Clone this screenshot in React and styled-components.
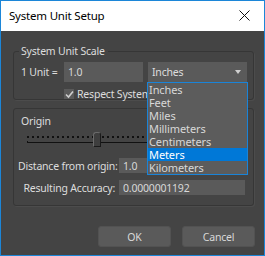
import React from "react";
import styled, { createGlobalStyle } from "styled-components";

const GlobalStyle = createGlobalStyle`
  html, body {
    margin: 0;
    padding: 0;
    background: #444444;
  }
  body {
    font-family: "Noto Sans", "Open Sans", sans-serif;
    font-size: 10.5px;
    letter-spacing: -0.2px;
  }
`;

const units = ["Inches", "Feet", "Miles", "Millimeters", "Centimeters", "Meters", "Kilometers"];

function App() {
    return (
        <Window>
            <GlobalStyle />
            <TitleBar>
                <Title>System Unit Setup</Title>
                <CloseIcon width="11" height="11" viewBox="0 0 11 11">
                    <path d="M0.5 0.5 L10.5 10.5 M10.5 0.5 L0.5 10.5" stroke="#111" strokeWidth="1" />
                </CloseIcon>
            </TitleBar>
            <Body>
                <ScaleGroup>
                    <Legend>System Unit Scale</Legend>
                    <UnitRow>
                        <Label>1 Unit =</Label>
                        <Field width={79} height={20}>1.0</Field>
                        <SelectWrap>
                            <Select>
                                Inches
                                <Arrow />
                            </Select>
                            <List>
                                {units.map((u) => (
                                    <Item key={u} selected={u === "Meters"}>{u}</Item>
                                ))}
                            </List>
                        </SelectWrap>
                    </UnitRow>
                    <CheckRow>
                        <CheckBox>
                            <svg width="9" height="9" viewBox="0 0 9 9">
                                <path d="M1 4.5 L3.5 7 L8 1.5" stroke="#cfcfcf" strokeWidth="1.6" fill="none" />
                            </svg>
                        </CheckBox>
                        <span>Respect System Units</span>
                    </CheckRow>
                </ScaleGroup>

                <OriginGroup>
                    <Heading>Origin</Heading>
                    <Slider>
                        <Dots />
                        <Track />
                        <Thumb />
                    </Slider>
                    <FieldGrid>
                        <RightLabel>Distance from origin:</RightLabel>
                        <Field height={15}>1.0</Field>
                        <RightLabel>Resulting Accuracy:</RightLabel>
                        <Field height={15}>0.0000001192</Field>
                    </FieldGrid>
                </OriginGroup>

                <Buttons>
                    <Button>OK</Button>
                    <Button>Cancel</Button>
                </Buttons>
            </Body>
        </Window>
    );
}

const Window = styled.div`
  width: 265px;
  height: 256px;
  box-sizing: border-box;
  border: 1px solid #1c86d8;
  display: flex;
  flex-direction: column;
  background: #444444;
  color: #dddddd;
  overflow: hidden;
`;

const TitleBar = styled.div`
  height: 30px;
  background: #ffffff;
  display: flex;
  align-items: center;
  justify-content: space-between;
  padding: 0 14px 0 8px;
  flex-shrink: 0;
`;

const Title = styled.span`
  font-family: "Noto Sans", sans-serif;
  font-size: 11.5px;
  letter-spacing: -0.2px;
  color: #000000;
  margin-top: -1px;
`;

const CloseIcon = styled.svg`
  display: block;
  margin-top: -2px;
`;

const Body = styled.div`
  flex: 1;
  display: flex;
  flex-direction: column;
  padding: 20px 10px 0 12px;
`;

const ScaleGroup = styled.div`
  position: relative;
  height: 49px;
  border: 1px solid #363636;
  border-radius: 3px;
  box-shadow: 1px 1px 0 #4c4c4c;
  padding: 10px 0 0 7px;
  box-sizing: border-box;
`;

const Legend = styled.span`
  position: absolute;
  left: 5px;
  top: -9px;
  padding: 0 3px 0 2px;
  background: #444444;
  line-height: 16px;
`;

const UnitRow = styled.div`
  display: flex;
  align-items: center;
`;

const Label = styled.span`
  width: 43px;
  white-space: nowrap;
`;

const Field = styled.div`
  width: ${(p) => (p.width ? `${p.width}px` : "auto")};
  height: ${(p) => p.height}px;
  background: #5a5a5a;
  display: flex;
  align-items: center;
  padding-left: 4px;
  box-sizing: border-box;
  color: #d8d8d8;
  white-space: nowrap;
`;

const SelectWrap = styled.div`
  position: relative;
  margin-left: 5px;
`;

const Select = styled.div`
  width: 99px;
  height: 20px;
  background: #5a5a5a;
  display: flex;
  align-items: center;
  justify-content: space-between;
  padding: 0 6px 0 4px;
  box-sizing: border-box;
`;

const Arrow = styled.span`
  width: 0;
  height: 0;
  border-left: 3.5px solid transparent;
  border-right: 3.5px solid transparent;
  border-top: 4px solid #cfcfcf;
`;

const List = styled.div`
  position: absolute;
  left: -1px;
  top: 20px;
  width: 101px;
  border: 1px solid #1a84d8;
  background: #5c5c5c;
  z-index: 2;
  box-sizing: border-box;
`;

const Item = styled.div`
  height: 13px;
  line-height: 13px;
  padding-left: 1px;
  background: ${(p) => (p.selected ? "#0078d7" : "transparent")};
  color: ${(p) => (p.selected ? "#ffffff" : "#d8d8d8")};
  font-size: 11px;
  letter-spacing: -0.1px;
`;

const CheckRow = styled.div`
  display: flex;
  align-items: center;
  gap: 3px;
  margin: 5px 0 0 43px;
  white-space: nowrap;
`;

const CheckBox = styled.span`
  width: 10px;
  height: 10px;
  background: #5a5a5a;
  display: flex;
  align-items: center;
  justify-content: center;
`;

const OriginGroup = styled.div`
  margin-top: 8px;
  height: 98px;
  border: 1px solid #363636;
  border-radius: 3px;
  box-shadow: 1px 1px 0 #4c4c4c;
  box-sizing: border-box;
  padding: 5px 0 0 7px;
`;

const Heading = styled.div`
  height: 14px;
  line-height: 14px;
`;

const Slider = styled.div`
  position: relative;
  height: 20px;
  margin: 3px 0 0 6px;
  width: 220px;
`;

const Dots = styled.div`
  position: absolute;
  left: 0;
  right: 0;
  top: 5px;
  height: 2px;
  background-image: linear-gradient(to right, #111 2px, transparent 2px);
  background-size: 5px 2px;
`;

const Track = styled.div`
  position: absolute;
  left: 0;
  right: 0;
  top: 10px;
  height: 2px;
  border-left: 1px solid #111;
  border-bottom: 1px solid #111;
  box-sizing: border-box;
`;

const Thumb = styled.div`
  position: absolute;
  left: 66px;
  top: 1px;
  width: 6px;
  height: 13px;
  background: #3e3e3e;
  border: 1px solid #1a1a1a;
  border-top-color: #6a6a6a;
  border-left-color: #6a6a6a;
  border-radius: 3px 3px 0 0;
`;

const FieldGrid = styled.div`
  display: grid;
  grid-template-columns: 97px 126px;
  column-gap: 4px;
  row-gap: 7px;
  align-items: center;
  margin: 7px 0 0 -3px;
`;

const RightLabel = styled.span`
  text-align: right;
  white-space: nowrap;
`;

const Buttons = styled.div`
  display: flex;
  justify-content: flex-end;
  gap: 11px;
  margin-top: 20px;
  margin-right: -1px;
`;

const Button = styled.div`
  width: 73px;
  height: 21px;
  background: #5a5a5a;
  border: 1px solid #525252;
  border-radius: 3px;
  box-sizing: border-box;
  display: flex;
  align-items: center;
  justify-content: center;
  color: #d8d8d8;
`;

export default App;
